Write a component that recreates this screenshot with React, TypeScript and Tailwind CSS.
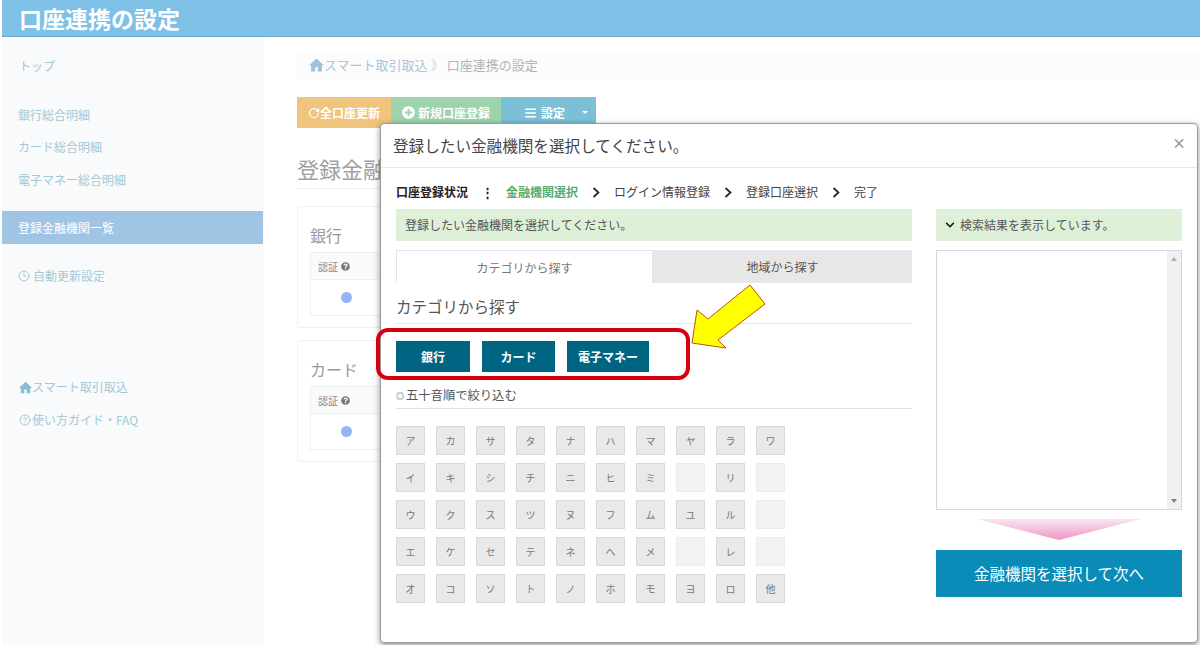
import React from "react";
import { FaPlusCircle, FaBars, FaQuestionCircle, FaChevronDown } from "react-icons/fa";
import { RotateCw, Clock, CircleHelp } from "lucide-react";

const kana = [
  ["ア","カ","サ","タ","ナ","ハ","マ","ヤ","ラ","ワ"],
  ["イ","キ","シ","チ","ニ","ヒ","ミ","","リ",""],
  ["ウ","ク","ス","ツ","ヌ","フ","ム","ユ","ル",""],
  ["エ","ケ","セ","テ","ネ","ヘ","メ","","レ",""],
  ["オ","コ","ソ","ト","ノ","ホ","モ","ヨ","ロ","他"],
];

function Home({ className }: { className: string }) {
  return (
    <svg className={className} viewBox="0 0 16 15" fill="currentColor">
      <path d="M8 0.5 L0 8 H2.2 V14.5 H6.5 V10 H9.5 V14.5 H13.8 V8 H16 Z" />
    </svg>
  );
}

function Chevron() {
  return (
    <svg className="mx-[14px]" width="8" height="11" viewBox="0 0 8 11" fill="none" stroke="#222222" strokeWidth="1.7">
      <path d="M1.5 1 L6.5 5.5 L1.5 10" />
    </svg>
  );
}

function BankCard({ title, className }: { title: string; className: string }) {
  return (
    <div className={`w-[400px] h-[122px] border border-[#eef0f1] rounded-[3px] px-[12px] pt-[17px] ${className}`}>
      <div className="text-[16px] leading-[22px] text-[#999999]">{title}</div>
      <div className="mt-[6px] border border-[#eef0f1] h-[64px]">
        <div className="h-[27px] bg-[#f9fafb] border-b border-[#eef0f1] flex items-center pl-[7px] text-[10px] text-[#888888] gap-[3px]">
          認証 <FaQuestionCircle className="w-[9px] h-[9px] text-[#777777]" />
        </div>
        <div className="pl-[30px] pt-[12px]">
          <div className="w-[11px] h-[11px] rounded-full bg-[#94b4f4]" />
        </div>
      </div>
    </div>
  );
}

export default function App() {
  return (
    <div className="relative w-[1200px] h-[645px] overflow-hidden bg-white font-['Noto_Sans_CJK_JP','Liberation_Sans',sans-serif]">
      <header className="ml-[2px] h-[37px] bg-[#7fc0e6] border-b border-[#72a9c8] pl-[17px] text-[23px] leading-[36px] font-bold text-white">
        口座連携の設定
      </header>
      <div className="flex h-[608px]">
        <aside className="ml-[2px] w-[262px] bg-[#f9fafb] pt-[17px] text-[12px] text-[#a3c9d6]">
          <div className="h-[24px] pl-[17px] leading-[24px]">トップ</div>
          <div className="mt-[21px] h-[32px] pl-[16px] leading-[32px]">銀行総合明細</div>
          <div className="h-[32px] pl-[16px] leading-[32px]">カード総合明細</div>
          <div className="h-[33px] pl-[16px] leading-[33px]">電子マネー総合明細</div>
          <div className="mt-[15px] h-[33px] w-[261px] bg-[#9fc4e4] pl-[16px] leading-[33px] text-white">登録金融機関一覧</div>
          <div className="mt-[16px] h-[32px] pl-[16px] flex items-center gap-[3px]">
            <Clock className="w-[12px] h-[12px]" strokeWidth={2} /> 自動更新設定
          </div>
          <div className="mt-[79px] h-[32px] pl-[17px] flex items-center text-[#a3c9d6]">
            <Home className="w-[13px] h-[13px] text-[#86bed2]" /> スマート取引取込
          </div>
          <div className="h-[33px] pl-[17px] flex items-center gap-[1px]">
            <CircleHelp className="w-[12px] h-[12px]" strokeWidth={2} /> 使い方ガイド・FAQ
          </div>
        </aside>
        <main className="pl-[33px] pt-[13px] flex-1">
          <nav className="h-[30px] bg-[#fcfcfc] pl-[12px] flex items-center text-[13px] text-[#a9c6dc]">
            <Home className="w-[15px] h-[14px] text-[#9fc1dc]" />
            スマート取引取込
            <span className="mx-[3px] text-[#c6d8e6]">》</span>
            <span className="text-[#b3b3b3]">口座連携の設定</span>
          </nav>
          <div className="mt-[17px] flex h-[31px] text-[12px] font-bold text-white">
            <div className="w-[94px] bg-[#f0c47d] flex items-center justify-center">
              <RotateCw className="w-[12px] h-[12px]" strokeWidth={2.5} />全口座更新
            </div>
            <div className="w-[110px] bg-[#9dd3ad] flex items-center justify-center gap-[3px]">
              <FaPlusCircle className="w-[13px] h-[13px]" /> 新規口座登録
            </div>
            <div className="w-[95px] bg-[#7cc0d8] flex items-center pl-[23px] gap-[4px]">
              <FaBars className="w-[13px] h-[12px]" /> 設定
              <span className="ml-[13px] w-0 h-0 border-x-[3px] border-x-transparent border-t-[3px] border-t-white" />
            </div>
          </div>
          <h2 className="mt-[27px] w-[400px] h-[34px] border-b border-[#eef0f1] text-[22px] leading-[26px] text-[#a0a0a0]">
            登録金融機関一覧
          </h2>
          <BankCard title="銀行" className="mt-[17px]" />
          <BankCard title="カード" className="mt-[12px]" />
        </main>
      </div>

      {/* Modal */}
      <div className="absolute left-[380px] top-[123px] w-[818px] h-[520px] bg-white rounded-[4px] border border-[#9a9a9a] shadow-[0_2px_6px_rgba(0,0,0,0.45)]">
        <div className="relative h-[44px] border-b border-[#e8e8e8] pl-[12px] text-[15.6px] leading-[42px] text-[#444444]">
          登録したい金融機関を選択してください。
          <span className="absolute right-[11px] top-[-3px] font-bold text-[14px] text-[#999999]">×</span>
        </div>
        <div className="flex pl-[15px] gap-[24px]">
          <div className="w-[516px]">
            <div className="h-[41px] flex items-center text-[12px] text-[#444444] pt-[7px]">
              <b className="text-[#222222]">口座登録状況</b>
              <b className="ml-[13px] mr-[12px] text-[#222222] text-[13px]">⋮</b>
              <span className="text-[#54ad6d] font-bold">金融機関選択</span>
              <Chevron />
              <span>ログイン情報登録</span>
              <Chevron />
              <span>登録口座選択</span>
              <Chevron />
              <span>完了</span>
            </div>
            <div className="h-[32px] bg-[#dff0d8] pl-[9px] text-[12px] leading-[32px] text-[#555555]">
              登録したい金融機関を選択してください。
            </div>
            <div className="mt-[9px] flex h-[33px] text-[12px] leading-[33px] text-center">
              <div className="w-[257px] border border-b-0 border-[#e4e4e4] text-[#777777]">カテゴリから探す</div>
              <div className="flex-1 bg-[#e7e7e7] text-[#555555]">地域から探す</div>
            </div>
            <div className="mt-[11px] h-[30px] border-b border-[#e8e8e8] text-[15.5px] leading-[24px] text-[#555555]">
              カテゴリから探す
            </div>
            <div className="mt-[17px] flex h-[31px] text-[12px] font-bold leading-[31px] text-center text-white">
              <div className="w-[74px] bg-[#006582]">銀行</div>
              <div className="ml-[12px] w-[73px] bg-[#006582]">カード</div>
              <div className="ml-[12px] w-[82px] bg-[#006582]">電子マネー</div>
            </div>
            <div className="mt-[12px] h-[25px] border-b border-[#e0e0e0] text-[12.3px] leading-[22px] text-[#555555]">
              <span className="text-[8px] align-[1px] mr-[2px]">◎</span>五十音順で絞り込む
            </div>
            <div className="mt-[17px] grid grid-cols-[repeat(10,29px)] gap-x-[11px] gap-y-[8px]">
              {kana.flat().map((k, i) => (
                <div
                  key={i}
                  className={
                    k
                      ? "h-[29px] bg-[#e9e9e9] border border-[#d9d9d9] text-[10px] leading-[27px] text-center text-[#777777]"
                      : "h-[29px] bg-[#f3f3f3] border border-[#ececec]"
                  }
                >
                  {k}
                </div>
              ))}
            </div>
          </div>
          <div className="w-[246px] pt-[41px]">
            <div className="h-[32px] bg-[#dff0d8] pl-[8px] flex items-center gap-[4px] text-[12px] text-[#555555]">
              <FaChevronDown className="w-[12px] h-[10px] text-[#222222]" />
              検索結果を表示しています。
            </div>
            <div className="mt-[9px] h-[260px] border border-[#d8d8d8] flex justify-end">
              <div className="w-[14px] bg-[#f1f1f1] flex flex-col justify-between items-center py-[6px]">
                <span className="w-0 h-0 border-x-[3px] border-x-transparent border-b-[4px] border-b-[#b0b0b0]" />
                <span className="w-0 h-0 border-x-[3px] border-x-transparent border-t-[4px] border-t-[#808080]" />
              </div>
            </div>
            <svg className="block mx-auto mt-[9px]" width="164" height="21" viewBox="0 0 164 21">
              <defs>
                <linearGradient id="pink" x1="0" y1="0" x2="0" y2="1">
                  <stop offset="0" stopColor="#fbe6f0" />
                  <stop offset="1" stopColor="#ee96c4" />
                </linearGradient>
              </defs>
              <polygon points="0,0 164,0 82,21" fill="url(#pink)" />
            </svg>
            <div className="mt-[10px] h-[47px] bg-[#0a8bb8] text-center text-[15.5px] leading-[47px] text-white">
              金融機関を選択して次へ
            </div>
          </div>
        </div>
      </div>

      {/* Red highlight */}
      <div className="absolute left-[376px] top-[328px] w-[314px] h-[52px] rounded-[12px] border-[4px] border-[#d6000f]" />
      {/* Yellow arrow */}
      <svg className="absolute left-[685px] top-[280px]" width="90" height="75" viewBox="0 0 90 75">
        <polygon
          points="65,5 80,24 33,60 41,68 7,63 12,30 23,39"
          fill="#ffff00"
          stroke="#b5560f"
          strokeWidth="1"
        />
      </svg>
    </div>
  );
}
